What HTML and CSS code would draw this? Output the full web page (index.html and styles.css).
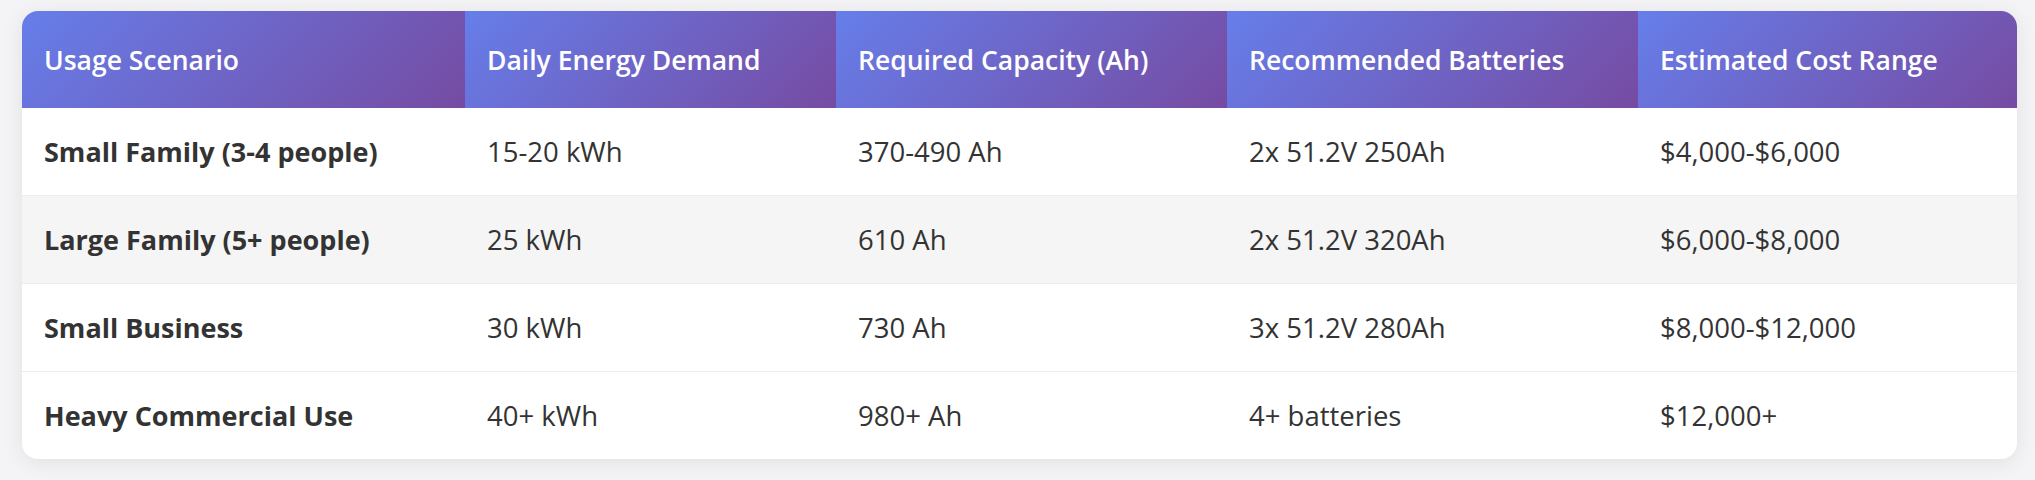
FILE: index.html
```html
<!DOCTYPE html>
<html lang="en">
<head>
<meta charset="utf-8">
<title>Battery Sizing Table</title>
<link rel="stylesheet" href="styles.css">
</head>
<body>
<div class="table-wrap">
  <table class="sizing">
    <colgroup>
      <col class="c1"><col class="c2"><col class="c3"><col class="c4"><col class="c5">
    </colgroup>
    <thead>
      <tr>
        <th>Usage Scenario</th>
        <th>Daily Energy Demand</th>
        <th>Required Capacity (Ah)</th>
        <th>Recommended Batteries</th>
        <th>Estimated Cost Range</th>
      </tr>
    </thead>
    <tbody>
      <tr>
        <td>Small Family (3-4 people)</td>
        <td>15-20 kWh</td>
        <td>370-490 Ah</td>
        <td>2x 51.2V 250Ah</td>
        <td>$4,000-$6,000</td>
      </tr>
      <tr class="hover">
        <td>Large Family (5+ people)</td>
        <td>25 kWh</td>
        <td>610 Ah</td>
        <td>2x 51.2V 320Ah</td>
        <td>$6,000-$8,000</td>
      </tr>
      <tr>
        <td>Small Business</td>
        <td>30 kWh</td>
        <td>730 Ah</td>
        <td>3x 51.2V 280Ah</td>
        <td>$8,000-$12,000</td>
      </tr>
      <tr>
        <td>Heavy Commercial Use</td>
        <td>40+ kWh</td>
        <td>980+ Ah</td>
        <td>4+ batteries</td>
        <td>$12,000+</td>
      </tr>
    </tbody>
  </table>
</div>
</body>
</html>
```

FILE: styles.css
```css
html, body {
  margin: 0;
  padding: 0;
  background: #f4f4f6;
}
body {
  padding: 11px 18px 23px 22px;
  font-family: "Open Sans", "Noto Sans", "Liberation Sans", sans-serif;
  color: #333;
}
.table-wrap {
  width: 1995px;
  border-radius: 16px;
  overflow: hidden;
  background: #fff;
  box-shadow: 0 4px 22px rgba(0, 0, 0, 0.08);
}
.sizing {
  width: 100%;
  border-collapse: collapse;
  table-layout: fixed;
}
.c1 { width: 443px; }
.c2 { width: 371px; }
.c3 { width: 391px; }
.c4 { width: 411px; }
.c5 { width: 379px; }
.sizing th {
  height: 97px;
  padding: 0 22px;
  text-align: left;
  font-size: 26.5px;
  font-weight: 600;
  color: #fff;
  background: linear-gradient(135deg, #667eea 0%, #764ba2 100%);
}
.sizing td {
  height: 87px;
  padding: 0 22px;
  font-size: 27.5px;
  border-bottom: 1px solid #ececec;
}
.sizing tbody tr:last-child td {
  border-bottom: none;
}
.sizing td:first-child {
  font-weight: 700;
  font-size: 27px;
}
.sizing tr.hover td {
  background: #f5f5f5;
}
```
